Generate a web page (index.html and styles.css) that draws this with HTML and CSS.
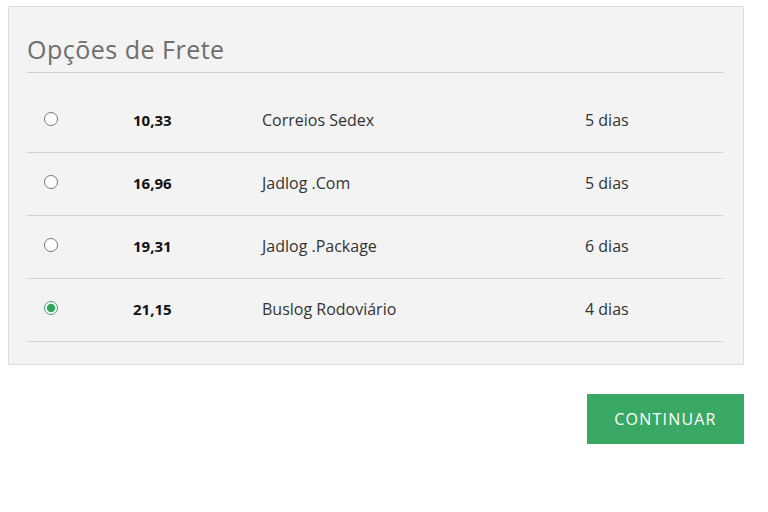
FILE: index.html
```html
<!DOCTYPE html>
<html lang="pt-BR">
<head>
<meta charset="utf-8">
<title>Opções de Frete</title>
<link rel="stylesheet" href="styles.css">
</head>
<body>
<div class="page">
  <section class="panel">
    <h2 class="title">Opções de Frete</h2>
    <table class="options">
      <tbody>
        <tr>
          <td class="c-radio"><input type="radio" name="frete"></td>
          <td class="c-price">10,33</td>
          <td class="c-name">Correios Sedex</td>
          <td class="c-days">5 dias</td>
        </tr>
        <tr>
          <td class="c-radio"><input type="radio" name="frete"></td>
          <td class="c-price">16,96</td>
          <td class="c-name">Jadlog .Com</td>
          <td class="c-days">5 dias</td>
        </tr>
        <tr>
          <td class="c-radio"><input type="radio" name="frete"></td>
          <td class="c-price">19,31</td>
          <td class="c-name">Jadlog .Package</td>
          <td class="c-days">6 dias</td>
        </tr>
        <tr>
          <td class="c-radio"><input type="radio" name="frete" checked></td>
          <td class="c-price">21,15</td>
          <td class="c-name">Buslog Rodoviário</td>
          <td class="c-days">4 dias</td>
        </tr>
      </tbody>
    </table>
  </section>
  <div class="actions">
    <button class="btn" type="button">CONTINUAR</button>
  </div>
</div>
</body>
</html>
```
FILE: styles.css
```css
html, body {
  margin: 0;
  padding: 0;
  background: #ffffff;
}
body {
  font-family: "Open Sans", "Liberation Sans", sans-serif;
  color: #333;
}
.page {
  width: 736px;
  padding: 6px 0 0 8px;
}
.panel {
  background: #f3f3f3;
  border: 1px solid #dcdcdc;
  padding: 26px 20px 22px 18px;
}
.title {
  margin: 0;
  font-weight: 400;
  font-size: 25px;
  letter-spacing: 0.5px;
  line-height: 32px;
  color: #6e6e6e;
  padding-bottom: 7px;
  border-bottom: 1px solid #cfcfcf;
}
.options {
  width: 100%;
  border-collapse: collapse;
  margin-top: 17px;
}
.options td {
  height: 59px;
  padding: 0 0 3px 0;
  border-bottom: 1px solid #d2d2d2;
  vertical-align: middle;
  font-size: 16px;
  color: #333;
}
.options td.c-radio {
  width: 89px;
  padding-left: 17px;
}
.c-radio input {
  margin: 0 0 4px 0;
  width: 14px;
  height: 14px;
  accent-color: #34a35c;
  vertical-align: middle;
}
.options td.c-price {
  width: 129px;
  font-size: 15px;
  font-weight: 700;
  color: #111;
}
.c-name {
  width: 323px;
}
.actions {
  display: flex;
  justify-content: flex-end;
  padding-top: 29px;
}
.btn {
  width: 157px;
  height: 50px;
  border: none;
  background: #3aa865;
  color: #fff;
  font-family: "Open Sans", "Liberation Sans", sans-serif;
  font-size: 16px;
  letter-spacing: 1.2px;
  cursor: pointer;
}
```
